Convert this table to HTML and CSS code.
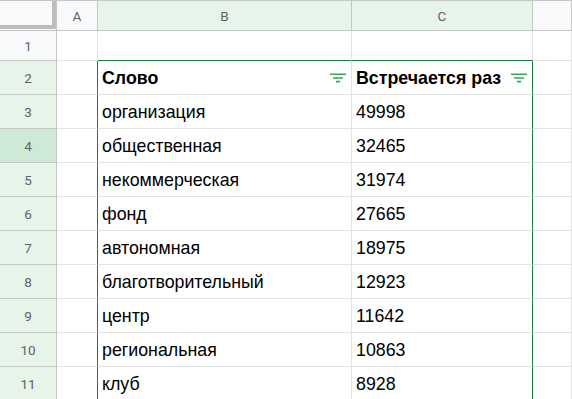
FILE: index.html
```html
<!DOCTYPE html>
<html lang="ru">
<head>
<meta charset="utf-8">
<link rel="stylesheet" href="styles.css">
</head>
<body>
<div class="sheet">
  <div class="hdr corner"><div class="corner-bar"></div></div>
  <div class="hdr col">A</div>
  <div class="hdr col sel">B</div>
  <div class="hdr col sel">C</div>
  <div class="hdr col"></div>

  <div class="hdr rowh">1</div>
  <div class="cell"></div>
  <div class="cell top-edge"></div>
  <div class="cell top-edge"></div>
  <div class="cell"></div>

  <div class="hdr rowh sel">2</div>
  <div class="cell left-edge"></div>
  <div class="cell head"><span>Слово</span><svg class="filt" width="16" height="10" viewBox="0 0 16 10"><path d="M0 1.2h16M3 5h10M6 8.6h4" stroke="#34a853" stroke-width="1.6"/></svg></div>
  <div class="cell head right-edge"><span>Встречается раз</span><svg class="filt" width="16" height="10" viewBox="0 0 16 10"><path d="M0 1.2h16M3 5h10M6 8.6h4" stroke="#34a853" stroke-width="1.6"/></svg></div>
  <div class="cell"></div>

  <div class="hdr rowh sel">3</div>
  <div class="cell left-edge"></div>
  <div class="cell">организация</div>
  <div class="cell right-edge">49998</div>
  <div class="cell"></div>

  <div class="hdr rowh cur">4</div>
  <div class="cell left-edge"></div>
  <div class="cell">общественная</div>
  <div class="cell right-edge">32465</div>
  <div class="cell"></div>

  <div class="hdr rowh sel">5</div>
  <div class="cell left-edge"></div>
  <div class="cell">некоммерческая</div>
  <div class="cell right-edge">31974</div>
  <div class="cell"></div>

  <div class="hdr rowh sel">6</div>
  <div class="cell left-edge"></div>
  <div class="cell">фонд</div>
  <div class="cell right-edge">27665</div>
  <div class="cell"></div>

  <div class="hdr rowh sel">7</div>
  <div class="cell left-edge"></div>
  <div class="cell">автономная</div>
  <div class="cell right-edge">18975</div>
  <div class="cell"></div>

  <div class="hdr rowh sel">8</div>
  <div class="cell left-edge"></div>
  <div class="cell">благотворительный</div>
  <div class="cell right-edge">12923</div>
  <div class="cell"></div>

  <div class="hdr rowh sel">9</div>
  <div class="cell left-edge"></div>
  <div class="cell">центр</div>
  <div class="cell right-edge">11642</div>
  <div class="cell"></div>

  <div class="hdr rowh sel">10</div>
  <div class="cell left-edge"></div>
  <div class="cell">региональная</div>
  <div class="cell right-edge">10863</div>
  <div class="cell"></div>

  <div class="hdr rowh sel">11</div>
  <div class="cell left-edge"></div>
  <div class="cell">клуб</div>
  <div class="cell right-edge">8928</div>
  <div class="cell"></div>
</div>
</body>
</html>
```

FILE: styles.css
```css
* { box-sizing: border-box; }
html, body { margin: 0; padding: 0; background: #fff; overflow: hidden; }
.sheet {
  display: grid;
  grid-template-columns: 57px 41px 254px 181px 1fr;
  grid-template-rows: 31px 30px repeat(10, 34px);
  width: 572px;
  font-family: "Liberation Sans", Arial, sans-serif;
}
.cell {
  border-right: 1px solid #e2e3e3;
  border-bottom: 1px solid #e2e3e3;
  display: flex;
  align-items: center;
  padding: 2px 5px 0 4px;
  font-size: 17.8px;
  color: #000;
  white-space: nowrap;
  overflow: hidden;
}
.hdr {
  background: #f8f9fa;
  border-right: 1px solid #c4c7c5;
  border-bottom: 1px solid #c4c7c5;
  display: flex;
  align-items: center;
  justify-content: center;
  font-family: Roboto, "Liberation Sans", sans-serif;
  font-size: 13.5px;
  color: #5f6368;
}
.col { border-top: 1px solid #c4c7c5; }
.corner { border-top: 1px solid #c4c7c5; align-items: flex-start; justify-content: flex-start; }
.corner-bar {
  width: 56px;
  height: 28px;
  border-right: 4px solid #bdbdbd;
  border-bottom: 4px solid #bdbdbd;
}
.hdr.sel { background: #e6f4ea; }
.hdr.cur { background: #ceead6; }
.top-edge { border-bottom: 1px solid #188038; }
.left-edge { border-right: 1px solid #188038; }
.right-edge { border-right: 1px solid #188038; }
.head { font-weight: bold; justify-content: space-between; padding-right: 5px; }
.filt { flex: none; margin-top: -1px; }
```
